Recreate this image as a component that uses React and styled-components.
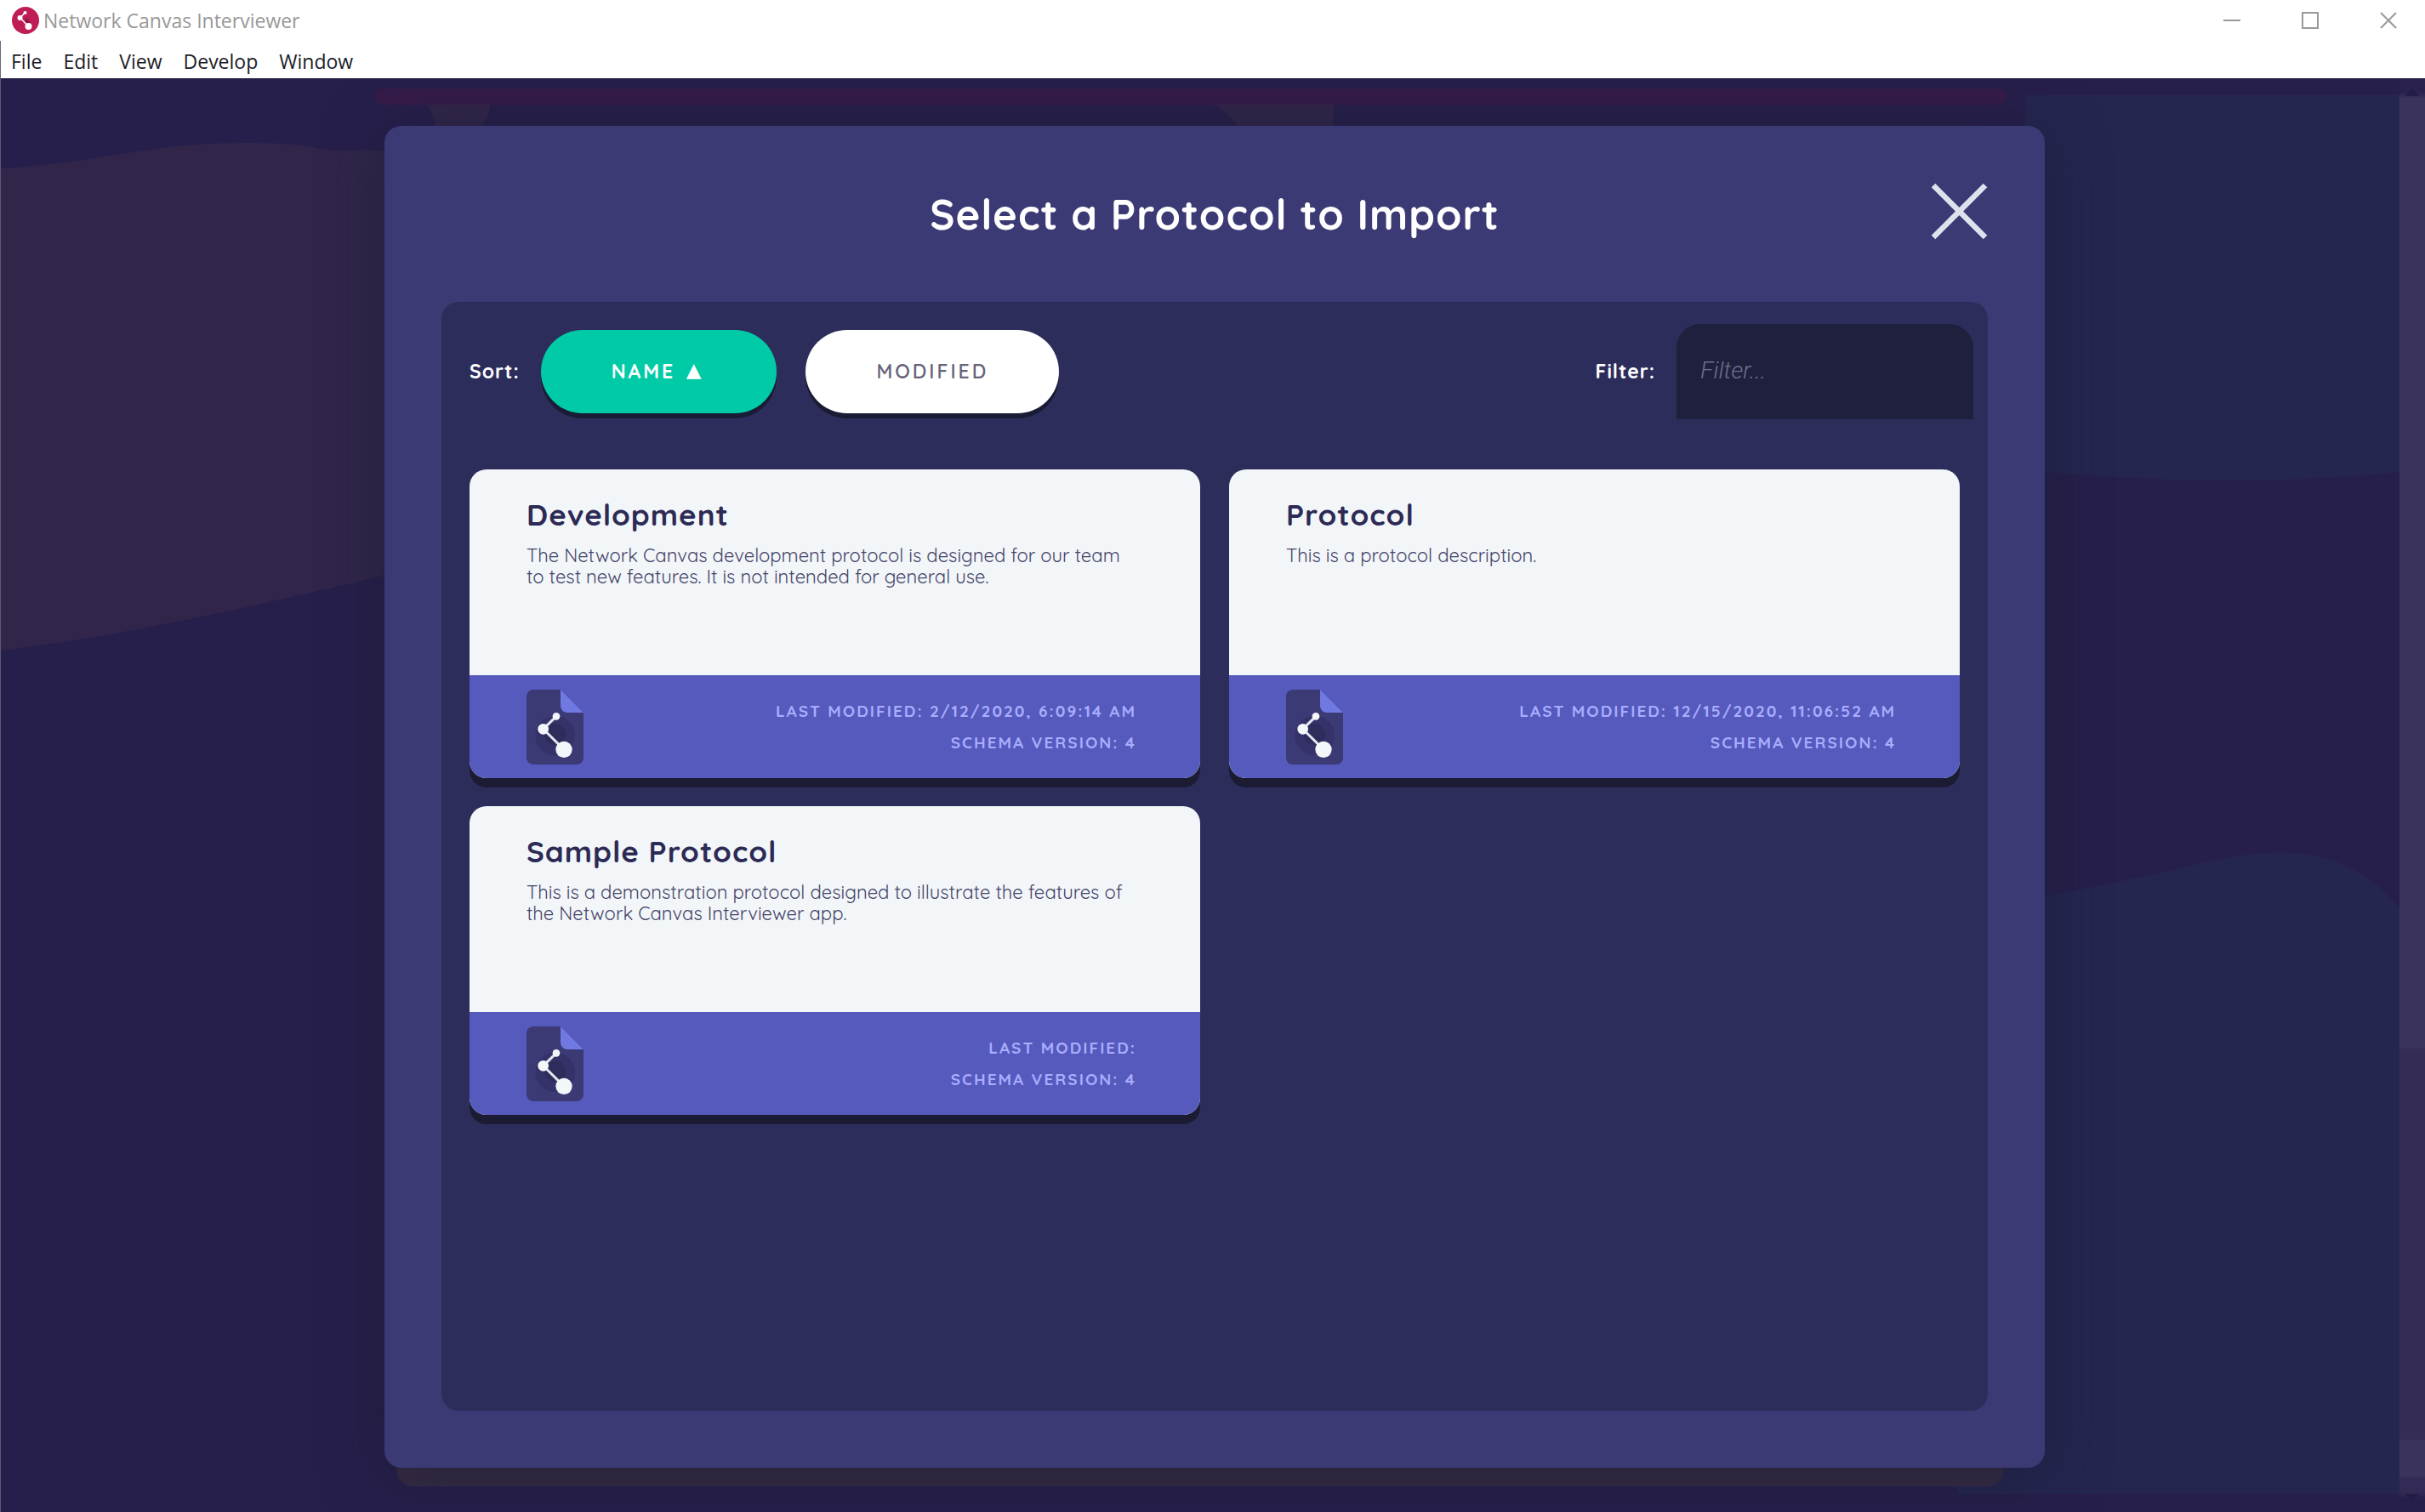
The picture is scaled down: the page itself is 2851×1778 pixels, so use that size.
import React, { useState } from 'react';
import styled, { createGlobalStyle } from 'styled-components';

const brandFont = 'Quicksand, Lato, "Noto Sans", sans-serif';
const systemFont = '"Segoe UI", "Open Sans", "Noto Sans", sans-serif';

const GlobalStyle = createGlobalStyle`
  *, *::before, *::after { box-sizing: border-box; }
  body { margin: 0; background: #fff; font-family: ${brandFont}; }
  button, input { font: inherit; }
`;

const WindowFrame = styled.div`
  display: flex;
  flex-direction: column;
  min-height: 100vh;
`;

const TitleBar = styled.header`
  display: flex;
  align-items: center;
  height: 48px;
  padding: 0 33px 0 14px;
  background: #fff;
  font-family: ${systemFont};
`;

const AppTitle = styled.div`
  margin-left: 5px;
  font-size: 23px;
  line-height: 32px;
  color: #999;
`;

const WindowControls = styled.div`
  display: flex;
  gap: 72px;
  margin-left: auto;
`;

const ControlButton = styled.button`
  display: block;
  width: 20px;
  height: 20px;
  padding: 0;
  border: 0;
  background: none;
  color: #999;
  cursor: pointer;

  svg { display: block; }
`;

const MenuBar = styled.nav`
  display: flex;
  gap: 25px;
  height: 44px;
  padding-left: 12px;
  border-left: 1px solid #6b6880;
  background: #fff;
  font-family: ${systemFont};
`;

const MenuItem = styled.button`
  height: 44px;
  padding: 3px 0 0;
  border: 0;
  background: none;
  font-size: 23px;
  line-height: 32px;
  color: #1c1c28;
  cursor: pointer;
`;

const Stage = styled.main`
  position: relative;
  flex: 1;
  display: flex;
  overflow: hidden;
  border-left: 1px solid #5b5870;
  background: #271f4b;
`;

const Backdrop = styled.svg`
  position: absolute;
  inset: 0;
  width: 100%;
  height: 100%;
`;

const Overlay = styled.div`
  position: relative;
  flex: 1;
  display: flex;
  justify-content: center;
  padding: 56px 0 52px 34px;
`;

const ScrollTrack = styled.div`
  position: relative;
  display: flex;
  flex-direction: column;
  flex: none;
  align-items: center;
  justify-content: space-between;
  width: 30px;
  padding: 12px 0;
  background: linear-gradient(#29204d 0 16px, #3a335c 24px 1140px, #352b55 1142px 1600px, #3a335c 1602px 1644px, #332a55 1646px 1662px, #271f4b 1670px);
`;

const LowerEdge = styled.div`
  position: absolute;
  left: 50%;
  bottom: 30px;
  width: 67%;
  height: 60px;
  transform: translateX(-50%);
  border-radius: 20px;
  background: #382c44;
`;

const Dialog = styled.section`
  position: relative;
  display: flex;
  flex-direction: column;
  width: calc(70% + 2px);
  padding: 0 67px 67px;
  border-radius: 20px;
  background: #3b3a75;
  box-shadow: 0 10px 70px rgba(24, 26, 48, 0.6);
`;

const DialogHeader = styled.div`
  display: grid;
  grid-template-columns: 67px 1fr 67px;
  align-items: center;
  height: 207px;
  padding-bottom: 6px;
`;

const DialogTitle = styled.h1`
  grid-column: 2;
  margin: 0;
  padding-top: 6px;
  font-size: 49px;
  line-height: 60px;
  font-weight: 700;
  letter-spacing: 1px;
  text-align: center;
  color: #fff;
`;

const CloseButton = styled.button`
  width: 67px;
  height: 67px;
  padding: 0;
  border: 0;
  background: none;
  cursor: pointer;

  svg { display: block; }
`;

const Panel = styled.div`
  flex: 1;
  padding: 26px 33px 33px;
  border-radius: 20px;
  background: #2d2d5c;
`;

const Toolbar = styled.div`
  display: flex;
  align-items: center;
  justify-content: space-between;
  margin-right: -16px;
  margin-bottom: 59px;
`;

const ToolGroup = styled.div`
  display: flex;
  align-items: center;
  gap: 25px;
`;

const ButtonRow = styled.div`
  display: flex;
  gap: 34px;
`;

const ToolLabel = styled.label`
  font-size: 23px;
  line-height: 28px;
  font-weight: 700;
  letter-spacing: 1px;
  color: #fff;
`;

const SortButton = styled.button`
  height: 98px;
  padding: 0 83px;
  border: 0;
  border-radius: 49px;
  background: ${({ $active }) => ($active ? '#00cba6' : '#fff')};
  box-shadow: 0 6px 0 #1a1b34;
  font-size: 23px;
  line-height: 28px;
  font-weight: ${({ $active }) => ($active ? 700 : 600)};
  letter-spacing: 3px;
  text-transform: uppercase;
  color: ${({ $active }) => ($active ? '#fff' : '#65637a')};
  cursor: pointer;
`;

const SortMark = styled.span`
  margin: 0 3px;
  font-family: "DejaVu Sans", sans-serif;
  font-weight: 400;
  line-height: 1;
  vertical-align: 2px;
`;

const FilterInput = styled.input`
  width: 349px;
  height: 112px;
  padding: 0 28px 4px;
  border: 0;
  border-radius: 28px 28px 0 0;
  outline: 0;
  background: #1e203d;
  font-family: Roboto, sans-serif;
  font-size: 28px;
  font-weight: 300;
  color: #fff;

  &::placeholder { color: #706e8a; font-style: italic; opacity: 1; }
`;

const CardGrid = styled.div`
  display: grid;
  grid-template-columns: 1fr 1fr;
  gap: 33px 34px;
`;

const Card = styled.article`
  display: flex;
  flex-direction: column;
  overflow: hidden;
  border-radius: 20px;
  background: #f2f6f8;
  box-shadow: 0 11px 0 #1b1c34;
`;

const CardBody = styled.div`
  height: 242px;
  padding: 31px 75px 0 67px;
  color: #2d2a55;
`;

const CardTitle = styled.h2`
  margin: 0 0 14px;
  font-size: 35px;
  line-height: 44px;
  font-weight: 700;
  letter-spacing: 1px;
`;

const CardText = styled.p`
  margin: 0;
  font-size: 22px;
  line-height: 25px;
  font-weight: 400;
  color: #45436a;
`;

const CardFooter = styled.div`
  display: flex;
  align-items: center;
  justify-content: space-between;
  height: 121px;
  padding: 0 75px 0 67px;
  background: #555abc;
`;

const CardMeta = styled.div`
  font-size: 19px;
  line-height: 37px;
  font-weight: 700;
  letter-spacing: 2px;
  text-align: right;
  text-transform: uppercase;
  color: #a9acff;
`;

const AppLogo = () => (
  <svg width="32" height="32" viewBox="0 0 32 32" aria-hidden="true">
    <circle cx="16" cy="16" r="16" fill="#be1e55" />
    <path d="M16 17l4 6 2-4-6-7z" fill="#8d1746" />
    <path d="M15 7l-5 6 9 10" fill="none" stroke="#fff" strokeWidth="1.5" />
    <circle cx="15.500" cy="7" r="2" fill="#fff" />
    <circle cx="9.500" cy="13" r="3" fill="#fff" />
    <circle cx="19.500" cy="23" r="4" fill="#fff" />
  </svg>
);

const ProtocolIcon = () => (
  <svg width="67" height="88" viewBox="0 0 201 264" aria-hidden="true">
    <path d="M24 0h96l81 81v159a24 24 0 0 1-24 24H24a24 24 0 0 1-24-24V24A24 24 0 0 1 24 0z" fill="#3b3a75" />
    <path d="M120 0l81 81h-57a24 24 0 0 1-24-24z" fill="#7078e2" />
    <circle cx="101" cy="162" r="70" fill="#353169" />
    <circle cx="101" cy="158" r="37" fill="#2d2c5b" />
    <path d="M105 94L59 139l73 72" fill="none" stroke="#e3e6f0" strokeWidth="9" />
    <circle cx="105" cy="94" r="13" fill="#f4f7fa" />
    <circle cx="59" cy="139" r="19" fill="#f4f7fa" />
    <circle cx="132" cy="211" r="29" fill="#f4f7fa" />
  </svg>
);

const Arrow = ({ up }) => (
  <svg width="16" height="9" viewBox="0 0 16 9" aria-hidden="true">
    <path d={up ? 'M0 9l8-9 8 9z' : 'M0 0l8 9 8-9z'} fill="#231c44" />
  </svg>
);

const BackdropArt = () => (
  <Backdrop viewBox="0 0 2850 1686" preserveAspectRatio="none" aria-hidden="true">
    <path d="M0 106C110 101 180 75 290 76S350 88 430 84L640 100V560L450 585C300 620 150 655 0 673z" fill="#31264a" />
    <path d="M2380 20H2821V463C2700 475 2560 477 2404 463L2380 440z" fill="#252650" />
    <path d="M2300 990C2400 960 2480 948 2560 930C2680 897 2760 902 2821 977V1665H2300z" fill="#252650" />
    <path d="M500 30h76q-4 22-18 34h-48q4-14-10-34zM1425 30h142v34h-110q-6-18-32-34z" fill="#32264a" />
    <rect x="440" y="12" width="1918" height="19" rx="9" fill="#361b49" />
  </Backdrop>
);

const protocols = [
  {
    name: 'Development',
    text: 'The Network Canvas development protocol is designed for our team to test new features. It is not intended for general use.',
    modified: '2/12/2020, 6:09:14 AM',
    schema: 4,
  },
  {
    name: 'Protocol',
    text: 'This is a protocol description.',
    modified: '12/15/2020, 11:06:52 AM',
    schema: 4,
  },
  {
    name: 'Sample Protocol',
    text: 'This is a demonstration protocol designed to illustrate the features of the Network Canvas Interviewer app.',
    modified: '',
    schema: 4,
  },
];

const ProtocolCard = ({ name, text, modified, schema }) => (
  <Card>
    <CardBody>
      <CardTitle>{name}</CardTitle>
      <CardText>{text}</CardText>
    </CardBody>
    <CardFooter>
      <ProtocolIcon />
      <CardMeta>
        <div>Last Modified: {modified}</div>
        <div>Schema Version: {schema}</div>
      </CardMeta>
    </CardFooter>
  </Card>
);

export default function App() {
  const [filter, setFilter] = useState('');
  const [sort, setSort] = useState('name');
  const shown = protocols.filter((p) => p.name.toLowerCase().includes(filter.toLowerCase()));

  return (
    <WindowFrame>
      <GlobalStyle />
      <TitleBar>
        <AppLogo />
        <AppTitle>Network Canvas Interviewer</AppTitle>
        <WindowControls>
          <ControlButton aria-label="Minimize">
            <svg width="20" height="20" viewBox="0 0 20 20"><path d="M0 10h20" stroke="currentColor" strokeWidth="2" /></svg>
          </ControlButton>
          <ControlButton aria-label="Maximize">
            <svg width="20" height="20" viewBox="0 0 20 20"><rect x="1" y="1" width="18" height="18" fill="none" stroke="currentColor" strokeWidth="2" /></svg>
          </ControlButton>
          <ControlButton aria-label="Close window">
            <svg width="20" height="20" viewBox="0 0 20 20"><path d="M1 1l18 18M19 1L1 19" stroke="currentColor" strokeWidth="2" /></svg>
          </ControlButton>
        </WindowControls>
      </TitleBar>
      <MenuBar>
        {['File', 'Edit', 'View', 'Develop', 'Window'].map((item) => (
          <MenuItem key={item}>{item}</MenuItem>
        ))}
      </MenuBar>
      <Stage>
        <BackdropArt />
        <Overlay>
          <LowerEdge />
          <Dialog role="dialog" aria-labelledby="dialog-title">
            <DialogHeader>
              <DialogTitle id="dialog-title">Select a Protocol to Import</DialogTitle>
              <CloseButton aria-label="Close">
                <svg width="67" height="67" viewBox="0 0 67 67">
                  <path d="M3 3l61 61M64 3L3 64" stroke="#dde2ec" strokeWidth="6.500" />
                </svg>
              </CloseButton>
            </DialogHeader>
            <Panel>
              <Toolbar>
                <ToolGroup>
                  <ToolLabel as="span">Sort:</ToolLabel>
                  <ButtonRow>
                    <SortButton $active={sort === 'name'} onClick={() => setSort('name')}>
                      Name {sort === 'name' && <SortMark>▲</SortMark>}
                    </SortButton>
                    <SortButton $active={sort === 'modified'} onClick={() => setSort('modified')}>
                      Modified {sort === 'modified' && <SortMark>▲</SortMark>}
                    </SortButton>
                  </ButtonRow>
                </ToolGroup>
                <ToolGroup>
                  <ToolLabel htmlFor="filter">Filter:</ToolLabel>
                  <FilterInput
                    id="filter"
                    placeholder="Filter..."
                    value={filter}
                    onChange={(e) => setFilter(e.target.value)}
                  />
                </ToolGroup>
              </Toolbar>
              <CardGrid>
                {shown.map((p) => (
                  <ProtocolCard key={p.name} {...p} />
                ))}
              </CardGrid>
            </Panel>
          </Dialog>
        </Overlay>
        <ScrollTrack>
          <Arrow up />
          <Arrow />
        </ScrollTrack>
      </Stage>
    </WindowFrame>
  );
}
